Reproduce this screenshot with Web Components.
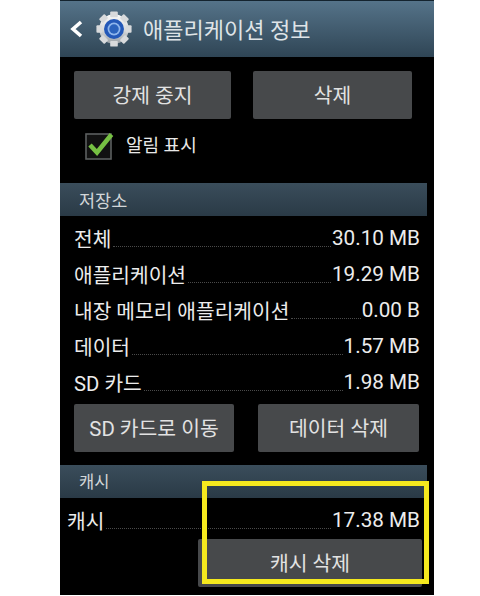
<!DOCTYPE html>
<html lang="ko">
<head>
<meta charset="utf-8">
<title>애플리케이션 정보</title>
<style>
  html, body { margin: 0; padding: 0; background: #fff; }
  body { font-family: Roboto, "Noto Sans CJK KR", sans-serif; color: #eee; }
</style>
</head>
<body>
<app-screen>
  <title-bar>애플리케이션 정보</title-bar>
  <button-row pad="14" top="14" gap="22">
    <action-button w="157">강제 중지</action-button>
    <action-button w="159">삭제</action-button>
  </button-row>
  <check-row>알림 표시</check-row>
  <section-head top="24">저장소</section-head>
  <stat-list top="4">
    <stat-row value="30.10 MB">전체</stat-row>
    <stat-row value="19.29 MB">애플리케이션</stat-row>
    <stat-row value="0.00 B">내장 메모리 애플리케이션</stat-row>
    <stat-row value="1.57 MB">데이터</stat-row>
    <stat-row value="1.98 MB">SD 카드</stat-row>
  </stat-list>
  <button-row pad="14" top="4" gap="24">
    <action-button w="160">SD 카드로 이동</action-button>
    <action-button w="161">데이터 삭제</action-button>
  </button-row>
  <section-head top="13" small>캐시</section-head>
  <stat-list top="4" inset="8">
    <stat-row value="17.38 MB">캐시</stat-row>
  </stat-list>
  <button-row pad="138" top="1" gap="0">
    <action-button w="224">캐시 삭제</action-button>
  </button-row>
  <mark-box></mark-box>
</app-screen>

<script>
class AppScreen extends HTMLElement {
  constructor() {
    super();
    this.attachShadow({ mode: 'open' }).innerHTML = `
      <style>
        :host {
          display: flex;
          flex-direction: column;
          position: relative;
          box-sizing: border-box;
          width: 374px;
          height: 595px;
          margin-left: 60px;
          background: #000;
          overflow: visible;
        }
      </style>
      <slot></slot>
    `;
  }
}

class TitleBar extends HTMLElement {
  constructor() {
    super();
    this.attachShadow({ mode: 'open' }).innerHTML = `
      <style>
        :host {
          display: flex;
          align-items: center;
          height: 57px;
          box-sizing: border-box;
          border-top: 1px solid #14232e;
          background: linear-gradient(#557389, #2f4555);
          color: #dfe4e7;
          font-size: 22px;
          flex: none;
        }
        .back { margin-left: 9px; width: 15px; height: 20px; }
        .gear { margin-left: 11px; width: 38px; height: 38px; }
        .text { margin-left: 10px; padding-bottom: 3px; }
      </style>
      <svg class="back" viewBox="0 0 15 20">
        <path d="M12 3 L4 10 L12 17" fill="none" stroke="#fff" stroke-width="3.6"/>
      </svg>
      <svg class="gear" viewBox="0 0 40 40">
        <defs>
          <linearGradient id="steel" x1="0" y1="0" x2="0" y2="1">
            <stop offset="0" stop-color="#fbfbfb"/>
            <stop offset="0.55" stop-color="#d4d7d9"/>
            <stop offset="1" stop-color="#9aa1a6"/>
          </linearGradient>
        </defs>
        <g fill="url(#steel)">
          <circle cx="20" cy="20" r="15.5"/>
        </g>
        <g fill="#d8dadc">
          <rect x="16" y="1.5" width="8" height="6" rx="1"/>
          <rect x="16" y="1.5" width="8" height="6" rx="1" transform="rotate(45 20 20)"/>
          <rect x="16" y="1.5" width="8" height="6" rx="1" transform="rotate(90 20 20)"/>
          <rect x="16" y="1.5" width="8" height="6" rx="1" transform="rotate(135 20 20)"/>
          <rect x="16" y="1.5" width="8" height="6" rx="1" transform="rotate(180 20 20)"/>
          <rect x="16" y="1.5" width="8" height="6" rx="1" transform="rotate(225 20 20)"/>
          <rect x="16" y="1.5" width="8" height="6" rx="1" transform="rotate(270 20 20)"/>
          <rect x="16" y="1.5" width="8" height="6" rx="1" transform="rotate(315 20 20)"/>
        </g>
        <circle cx="20" cy="20" r="10.5" fill="#2358b8"/>
        <circle cx="20" cy="20" r="6.8" fill="#8fb6ec"/>
        <circle cx="20" cy="20" r="5" fill="#2a62bc"/>
      </svg>
      <span class="text"><slot></slot></span>
    `;
  }
}

class ButtonRow extends HTMLElement {
  constructor() {
    super();
    this.attachShadow({ mode: 'open' }).innerHTML = `
      <style>
        :host {
          display: flex;
          flex: none;
          padding-left: var(--pad, 14px);
          gap: var(--gap, 22px);
          margin-top: var(--top, 0);
        }
      </style>
      <slot></slot>
    `;
  }

  connectedCallback() {
    this.style.setProperty('--pad', `${this.getAttribute('pad')}px`);
    this.style.setProperty('--gap', `${this.getAttribute('gap')}px`);
    this.style.setProperty('--top', `${this.getAttribute('top')}px`);
  }
}

class ActionButton extends HTMLElement {
  constructor() {
    super();
    this.attachShadow({ mode: 'open' }).innerHTML = `
      <style>
        :host {
          display: flex;
          align-items: center;
          justify-content: center;
          flex: none;
          height: 48px;
          box-sizing: border-box;
          padding-bottom: 2px;
          width: var(--w, 150px);
          background: #47494b;
          border-radius: 2px;
          color: #e2e2e2;
          font-size: 20.4px;
        }
      </style>
      <slot></slot>
    `;
  }

  connectedCallback() {
    this.style.setProperty('--w', `${this.getAttribute('w')}px`);
  }
}

class CheckRow extends HTMLElement {
  constructor() {
    super();
    this.attachShadow({ mode: 'open' }).innerHTML = `
      <style>
        :host {
          display: flex;
          align-items: center;
          flex: none;
          height: 28px;
          margin-top: 12px;
          padding-left: 25px;
          color: #e8e8e8;
          font-size: 18px;
        }
        svg { width: 30px; height: 30px; flex: none; }
        span { margin-left: 11px; padding-bottom: 2px; }
      </style>
      <svg viewBox="0 0 30 30">
        <rect x="1" y="4" width="25" height="25" fill="#111" stroke="#5c5f60" stroke-width="1.6"/>
        <path d="M5 15 L12 22.5 L26.5 4.5" fill="none" stroke="#76c043" stroke-width="4.6"/>
      </svg>
      <span><slot></slot></span>
    `;
  }
}

class SectionHead extends HTMLElement {
  constructor() {
    super();
    this.attachShadow({ mode: 'open' }).innerHTML = `
      <style>
        :host {
          display: flex;
          align-items: center;
          flex: none;
          width: 367px;
          height: 33px;
          box-sizing: border-box;
          padding-left: 19px;
          padding-bottom: 1px;
          margin-top: var(--top, 0);
          background: linear-gradient(#3a4d5b, #2a3a46);
          color: #d2d6d8;
          font-size: 17.5px;
        }
        :host([small]) { font-size: 16.5px; }
      </style>
      <slot></slot>
    `;
  }

  connectedCallback() {
    this.style.setProperty('--top', `${this.getAttribute('top')}px`);
  }
}

class StatList extends HTMLElement {
  constructor() {
    super();
    this.attachShadow({ mode: 'open' }).innerHTML = `
      <style>
        :host {
          display: flex;
          flex-direction: column;
          flex: none;
          width: 360px;
          box-sizing: border-box;
          margin-top: var(--top, 0);
          padding-left: var(--inset, 15px);
        }
      </style>
      <slot></slot>
    `;
  }

  connectedCallback() {
    this.style.setProperty('--top', `${this.getAttribute('top')}px`);
    if (this.hasAttribute('inset')) {
      this.style.setProperty('--inset', `${this.getAttribute('inset')}px`);
    }
  }
}

class StatRow extends HTMLElement {
  constructor() {
    super();
    this.attachShadow({ mode: 'open' }).innerHTML = `
      <style>
        :host {
          display: flex;
          align-items: flex-start;
          height: 36px;
          line-height: 36px;
          font-size: 20.3px;
          color: #ececec;
        }
        .label { padding-top: 2px; margin-left: -1px; }
        .dots {
          flex: 1;
          margin: 26px 1px 0 2px;
          border-bottom: 1px dotted #4a4a4a;
          height: 0;
        }
        .value { font-size: 20.7px; }
      </style>
      <span class="label"><slot></slot></span>
      <span class="dots"></span>
      <span class="value"></span>
    `;
  }

  connectedCallback() {
    this.shadowRoot.querySelector('.value').textContent = this.getAttribute('value');
  }
}

// the yellow highlight sits over the screen, it is not part of the layout
class MarkBox extends HTMLElement {
  constructor() {
    super();
    this.attachShadow({ mode: 'open' }).innerHTML = `
      <style>
        :host {
          position: absolute;
          left: 142px;
          top: 481px;
          width: 227px;
          height: 103px;
          box-sizing: border-box;
          border: 5px solid #f5e91e;
        }
      </style>
    `;
  }
}

customElements.define('app-screen', AppScreen);
customElements.define('title-bar', TitleBar);
customElements.define('button-row', ButtonRow);
customElements.define('action-button', ActionButton);
customElements.define('check-row', CheckRow);
customElements.define('section-head', SectionHead);
customElements.define('stat-list', StatList);
customElements.define('stat-row', StatRow);
customElements.define('mark-box', MarkBox);
</script>
</body>
</html>
